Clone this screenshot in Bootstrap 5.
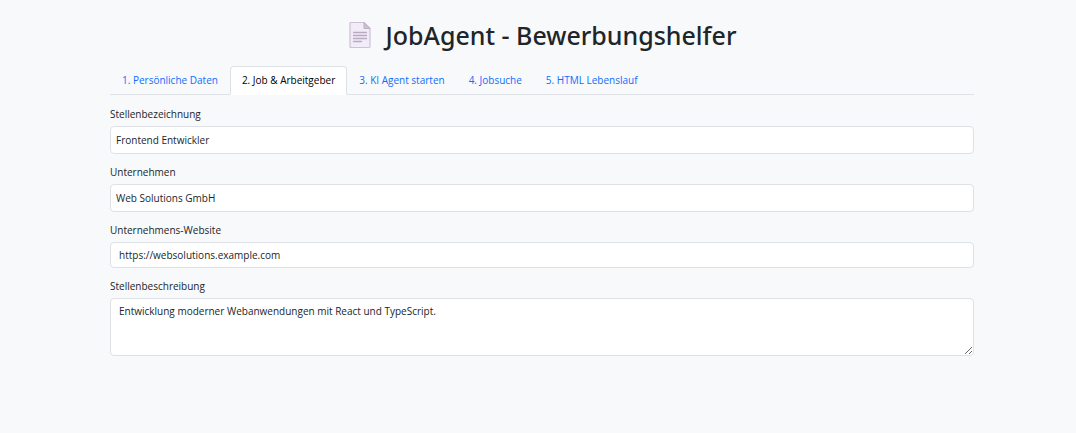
<!DOCTYPE html>
<html lang="de">
<head>
<meta charset="utf-8">
<meta name="viewport" content="width=device-width, initial-scale=1">
<title>JobAgent - Bewerbungshelfer</title>
<link href="https://cdn.jsdelivr.net/npm/bootstrap@5.3.0/dist/css/bootstrap.min.css" rel="stylesheet">
<style>
  body { font-family: "Open Sans", "Noto Sans", sans-serif; font-size: 10px; line-height: 16px; padding-left: 8px; }
  .app-shell { max-width: 888px; padding: 20px 12px 0; }
  .app-title { font-family: "Noto Sans", "Open Sans", sans-serif; font-size: 25px; line-height: 30px; font-weight: 500; gap: 14px; margin-bottom: 16px; }
  .app-title svg { width: 24px; height: 28px; }
  .nav-tabs .nav-link { padding: 5px 11px 6px; border-radius: 4px 4px 0 0; }
  .nav-tabs .nav-link.active { color: #000; }
  .tab-content { padding-top: 11px; }
  .form-label { margin-bottom: 4px; }
  .form-control { font-size: 10px; line-height: 16px; padding: 4px 8px; min-height: 0; border-radius: 4px; }
  .form-control.roomy { padding: 5px; }
  .field { margin-bottom: 10px; }
  textarea.form-control { height: 58px; }
</style>
</head>
<body class="bg-light">
<main class="container app-shell">
  <h1 class="app-title d-flex justify-content-center align-items-center">
    <svg viewBox="0 0 24 28" aria-hidden="true">
      <path d="M3 1.500h13l6 6v18q0 1-1 1H3q-1 0-1-1v-23q0-1 1-1z" fill="#f2ebf8" stroke="#cdc1d3" stroke-width="1.200"/>
      <path d="M16 1.500v6h6z" fill="#cdc1d3" stroke="#bdb0c6" stroke-width="1"/>
      <path d="M5.500 11.500h13M5.500 14.500h13M5.500 17.500h13M5.500 20.500h8" stroke="#b8abc1" stroke-width="1.300" stroke-linecap="round"/>
    </svg>
    <span>JobAgent - Bewerbungshelfer</span>
  </h1>
  <ul class="nav nav-tabs" role="tablist">
    <li class="nav-item" role="presentation"><button class="nav-link" type="button" role="tab">1. Persönliche Daten</button></li>
    <li class="nav-item" role="presentation"><button class="nav-link active" type="button" role="tab" aria-selected="true">2. Job &amp; Arbeitgeber</button></li>
    <li class="nav-item" role="presentation"><button class="nav-link" type="button" role="tab">3. KI Agent starten</button></li>
    <li class="nav-item" role="presentation"><button class="nav-link" type="button" role="tab">4. Jobsuche</button></li>
    <li class="nav-item" role="presentation"><button class="nav-link" type="button" role="tab">5. HTML Lebenslauf</button></li>
  </ul>
  <form class="tab-content">
    <div class="field">
      <label class="form-label d-block" for="title">Stellenbezeichnung</label>
      <input class="form-control roomy" id="title" type="text" value="Frontend Entwickler">
    </div>
    <div class="field">
      <label class="form-label d-block" for="company">Unternehmen</label>
      <input class="form-control roomy" id="company" type="text" value="Web Solutions GmbH">
    </div>
    <div class="field">
      <label class="form-label d-block" for="website">Unternehmens-Website</label>
      <input class="form-control" id="website" type="url" value="https://websolutions.example.com">
    </div>
    <div class="field">
      <label class="form-label d-block" for="description">Stellenbeschreibung</label>
      <textarea class="form-control" id="description">Entwicklung moderner Webanwendungen mit React und TypeScript.</textarea>
    </div>
  </form>
</main>
<script src="https://cdn.jsdelivr.net/npm/bootstrap@5.3.0/dist/js/bootstrap.bundle.min.js"></script>
</body>
</html>
